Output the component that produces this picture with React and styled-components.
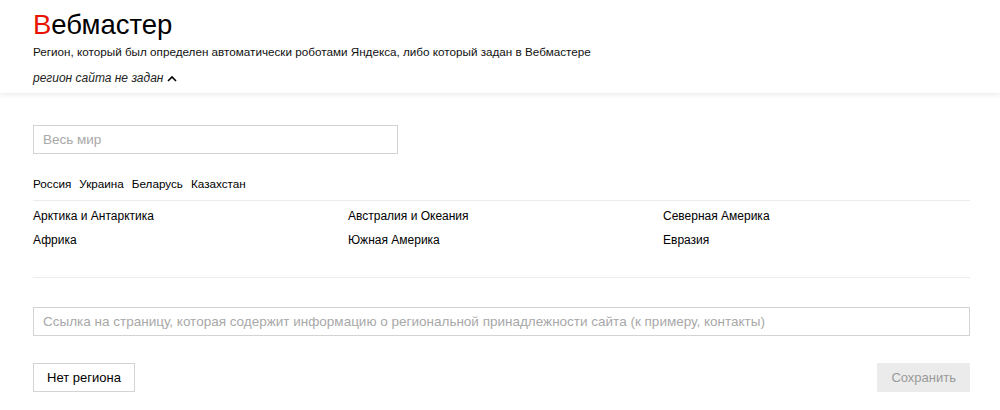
import React from 'react'
import styled, { createGlobalStyle } from 'styled-components'

const GlobalStyle = createGlobalStyle`
  body {
    margin: 0;
    background: #fff;
    font-family: "Liberation Sans", Arial, sans-serif;
    color: #000;
  }
`

const Header = styled.header`
  padding: 10px 30px 6px 33px;
  background: #fff;
  box-shadow: 0 2px 5px rgba(0, 0, 0, 0.08);
  position: relative;
`

const Title = styled.h1`
  margin: 0;
  font-size: 27.5px;
  line-height: 30px;
  font-weight: normal;
  color: #000;
`

const Red = styled.span`
  color: #e61400;
`

const Subtitle = styled.p`
  margin: 3px 0 0;
  font-size: 11.7px;
  line-height: 18px;
  color: #111;
`

const Toggle = styled.div`
  margin-top: 8px;
  display: flex;
  align-items: center;
  gap: 4px;
  font-size: 12px;
  line-height: 18px;
  font-style: italic;
  color: #222;
`

const Main = styled.main`
  width: 937px;
  margin-left: 33px;
  padding-top: 32px;
`

const Input = styled.input`
  box-sizing: border-box;
  display: block;
  width: ${p => p.$width || '100%'};
  height: 29px;
  padding: 0 9px;
  border: 1px solid #d3d3d3;
  font-family: "Liberation Sans", Arial, sans-serif;
  font-size: 13.5px;
  color: #000;
  outline: none;
  &::placeholder {
    color: #a8a8a8;
  }
`

const Countries = styled.div`
  display: flex;
  gap: 8px;
  margin-top: 22px;
  padding-bottom: 8px;
  border-bottom: 1px solid #ececec;
  font-size: 11.7px;
  line-height: 16px;
`

const Link = styled.span`
  color: #000;
  cursor: pointer;
`

const Regions = styled.div`
  display: grid;
  grid-template-columns: 315px 315px 1fr;
  grid-auto-rows: 24px;
  align-items: center;
  padding: 3px 0 25px;
  border-bottom: 1px solid #ececec;
  font-size: 12px;
`

const LinkRow = styled.div`
  margin-top: 29px;
`

const Actions = styled.div`
  display: flex;
  justify-content: space-between;
  margin-top: 27px;
`

const Button = styled.button`
  box-sizing: border-box;
  height: 29px;
  padding: 0 13px;
  border: 1px solid ${p => (p.$disabled ? '#ebebeb' : '#d3d3d3')};
  background: ${p => (p.$disabled ? '#ebebeb' : '#fff')};
  color: ${p => (p.$disabled ? '#999' : '#000')};
  font-family: "Liberation Sans", Arial, sans-serif;
  font-size: 13px;
  cursor: ${p => (p.$disabled ? 'default' : 'pointer')};
`

const regions = [
  'Арктика и Антарктика',
  'Австралия и Океания',
  'Северная Америка',
  'Африка',
  'Южная Америка',
  'Евразия',
]

const App = () => {
  return (
    <>
      <GlobalStyle />
      <Header>
        <Title><Red>В</Red>ебмастер</Title>
        <Subtitle>Регион, который был определен автоматически роботами Яндекса, либо который задан в Вебмастере</Subtitle>
        <Toggle>
          регион сайта не задан
          <svg width="10" height="7" viewBox="0 0 10 7">
            <path d="M1 6 L5 2 L9 6" fill="none" stroke="#000" strokeWidth="1.6" />
          </svg>
        </Toggle>
      </Header>
      <Main>
        <Input $width="365px" placeholder="Весь мир" />
        <Countries>
          <Link>Россия</Link>
          <Link>Украина</Link>
          <Link>Беларусь</Link>
          <Link>Казахстан</Link>
        </Countries>
        <Regions>
          {regions.map(r => <Link key={r}>{r}</Link>)}
        </Regions>
        <LinkRow>
          <Input placeholder="Ссылка на страницу, которая содержит информацию о региональной принадлежности сайта (к примеру, контакты)" />
        </LinkRow>
        <Actions>
          <Button>Нет региона</Button>
          <Button $disabled>Сохранить</Button>
        </Actions>
      </Main>
    </>
  )
}

export default App
